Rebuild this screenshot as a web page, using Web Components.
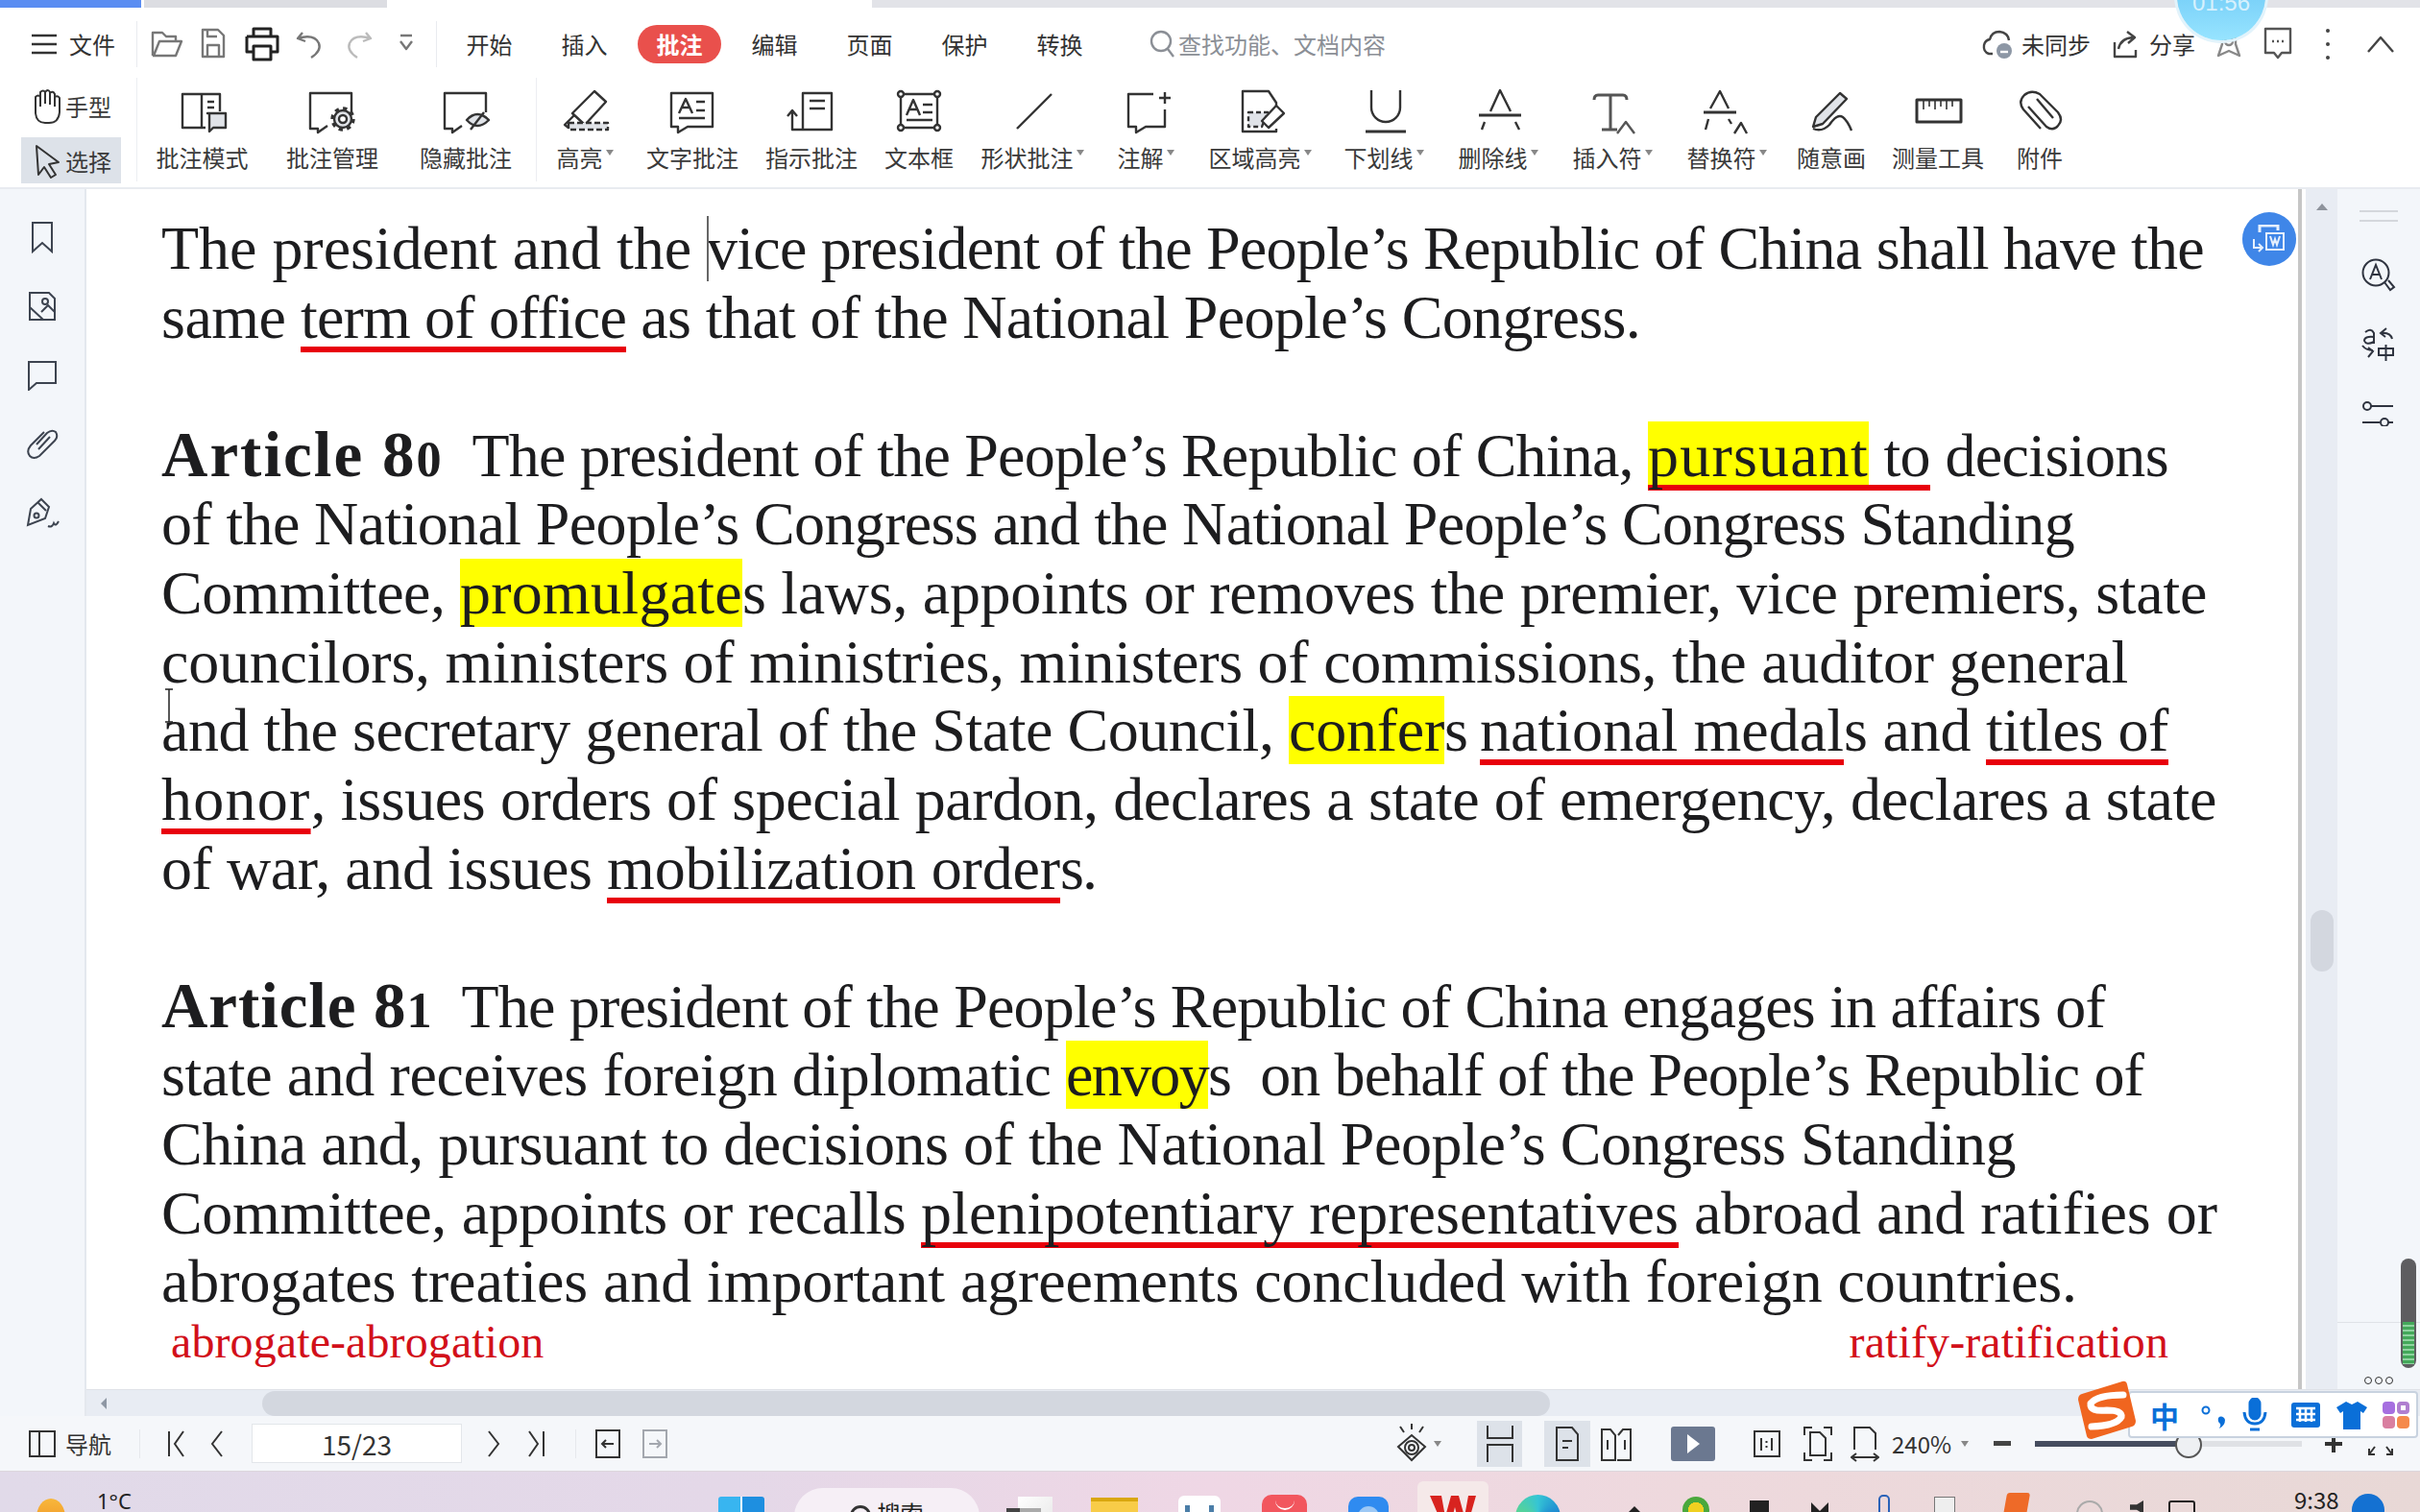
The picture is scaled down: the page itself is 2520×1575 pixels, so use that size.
<!DOCTYPE html>
<html>
<head>
<meta charset="utf-8">
<title>批注</title>
<style>
	html, body { margin: 0; padding: 0; background: #fff; }
</style>
</head>
<body>
<wps-app></wps-app>
<script>
(() => {

	const cjk = `'Noto Sans CJK SC', 'Noto Sans', sans-serif`;
	const G = '#e0e3e8';

	const svg = (w, h, body, extra = '') =>
		`<svg xmlns="http://www.w3.org/2000/svg" width="${w}" height="${h}" viewBox="0 0 ${w} ${h}" fill="none" stroke="#333" stroke-width="2.4" stroke-linejoin="round" ${extra}>${body}</svg>`;

	const tool_icons = {
		mode: `<path d="M29 6H9V41H29V6H48V24M29 41H33M35 14H42M35 20H42"/><path d="M35 26H54V41H41L37 45V26Z" fill="${G}"/>`,
		manage: `<path d="M50 25V5H7V42H15V46L25 39"/><circle cx="41" cy="32" r="11" stroke-width="3.4" stroke-dasharray="4.3 4.3"/><circle cx="41" cy="32" r="9" fill="${G}"/><circle cx="41" cy="32" r="4" fill="#fff"/>`,
		hide: `<path d="M51 25V5H8V42H16V46L26 39"/><path d="M31 33Q42 21 54 33Q42 45 31 33Z" fill="${G}"/><path d="M49 25L35 43"/>`,
		marker: `<path d="M40 3L52 14L30 38L17 26Z"/><path d="M19 28L9 38L13 41H24L28 36"/><path d="M13 36H54V43H13Z" fill="${G}" stroke-dasharray="6 3"/>`,
		text_note: `<path d="M8 5H51V40H25L15 46V40H8Z"/><path d="M16 26L23 11L30 26M19 20H27M34 14H43M34 23H43M16 31H43"/>`,
		pointer: `<path d="M21 5H51V43H21ZM21 43H10V24M5 29L10 23L15 29M28 13H44M28 21H44"/>`,
		textbox: `<path d="M11 6H49V41H11Z"/><circle cx="11" cy="6" r="3" fill="#fff"/><circle cx="49" cy="6" r="3" fill="#fff"/><circle cx="11" cy="41" r="3" fill="#fff"/><circle cx="49" cy="41" r="3" fill="#fff"/><path d="M17 28L24 12L31 28M20 22H28M34 17H44M34 25H44M17 33H44"/>`,
		line: `<path d="M50 6L14 42"/>`,
		note: `<path d="M38 6H12V40H20V46L30 40H50V22M50 4V16M44 10H56"/>`,
		area: `<path d="M47 21V15L39 3H12V45H47V42"/><path d="M18 25H38L32 40H18Z" fill="${G}" stroke-dasharray="5 3"/><path d="M47 18L55 26L39 41L32 34Z" fill="#fff"/>`,
		underline: `<path d="M17 2V20A15 15 0 0 0 47 20V2"/><path d="M11 45H53" stroke-width="3"/>`,
		strike: `<path d="M22 24L32 2L43 24M16 35L13 43M48 35L52 43"/><path d="M10 28H54" stroke-width="3"/>`,
		insert: `<g stroke="#555"><path d="M11 12Q11 7 15 7H41Q45 7 45 12M28 7V43M19 43H35" stroke-width="3"/><path d="M35 47L44 35L53 47"/></g>`,
		replace: `<path d="M13 21L23 3L32 21M11 32L8 43M32 32L35 37M38 47L45 36L51 47"/><path d="M6 25H40" stroke-width="3"/>`,
		pencil: `<path d="M39 5L46 11L21 37L11 40L14 30Z" fill="${G}"/><path d="M11 42Q20 46 28 38Q36 26 42 30Q47 34 51 44"/>`,
		ruler: `<path d="M8 12H54V35H8Z" stroke-width="3"/><path d="M15 13V22M21 13V19M27 13V22M33 13V19M39 13V22M45 13V19" stroke-width="1.6"/>`,
		clip: `<path d="M18 19L37 40Q44 45 49 39Q55 33 49 25L30 6Q21 1 14 7Q7 14 13 22L31 42M27 11L44 31"/>`
	};

	const top_icons = {
		folder: `<path d="M6 32V8H16L20 12H30V17M6 32H30L36 17H13L7 32"/>`,
		save: `<path d="M8 5H24L30 11V33H8ZM13 5V12H23M13 33V21H25V33"/>`,
		print: `<path d="M11 12V4H29V12M4 12H36V28H30M10 28H4V12M11 22H29V36H11Z" stroke-width="3"/>`,
		undo: `<path d="M12 8L7 14L15 17M7 14Q24 9 29 19Q32 27 21 34"/>`,
		redo: `<path d="M28 8L33 14L25 17M33 14Q16 9 11 19Q8 27 19 34" stroke="#bbb"/>`,
		more: `<path d="M14 11H26M14 17L20 25L26 17"/>`,
		hand: `<path d="M12 20V8M12 20V5Q15 2 17 5V17M17 5Q20 1 22 5V18M22 6Q25 3 27 7V20M7 20V10Q10 7 12 10M27 10Q30 8 32 11V26Q31 37 21 37H17Q8 37 7 27L7 18"/>`,
		arrow: `<path d="M8 5L10 35L16 27L23 38L28 35L21 24L31 22Z"/>`
	};

	class RibbonTool extends HTMLElement {
		connectedCallback() {
			const root = this.attachShadow({ mode: 'open' });
			const caret = this.hasAttribute('caret') ? '<i></i>' : '';
			root.innerHTML = `
				<style>
					:host { display: flex; flex-direction: column; align-items: center; width: ${this.getAttribute('w')}px; flex: none; }
					svg { display: block; }
					.label { margin-top: 3px; font-size: 24px; line-height: 34px; color: #3a3a3a; white-space: nowrap; }
					i { display: inline-block; margin: 0 0 12px 3px; border: 4px solid transparent; border-top: 6px solid #888; border-bottom: 0; }
				</style>
				${svg(60, 52, tool_icons[this.getAttribute('icon')])}
				<div class="label">${this.getAttribute('label')}${caret}</div>`;
		}
	}

	class TopBar extends HTMLElement {
		constructor() {
			super();
			const tabs = ['开始', '插入', '批注', '编辑', '页面', '保护', '转换'];
			this.attachShadow({ mode: 'open' }).innerHTML = `
				<style>
					:host { display: flex; align-items: center; height: 72px; padding-top: 3px; box-sizing: border-box; font-size: 24px; color: #333; white-space: nowrap; }
					.sep { width: 1px; height: 48px; background: #e9ebef; flex: none; }
					.file { width: 142px; display: flex; align-items: center; gap: 12px; padding-left: 32px; box-sizing: border-box; }
					.qa { display: flex; padding-left: 5px; width: 311px; box-sizing: border-box; }
					.qa svg { width: 50px; height: 40px; }
					.qa span { width: 50px; flex: none; display: flex; justify-content: center; }
					.tab { width: 99px; text-align: center; flex: none; }
					.tab b { display: inline-block; width: 87px; height: 40px; line-height: 40px; border-radius: 20px; background: #e9504c; color: #fff; font-weight: 700; }
					.search { display: flex; align-items: center; gap: 2px; margin-left: 42px; color: #8b8f96; }
					.right { margin-left: auto; display: flex; align-items: center; }
					.right span { display: block; }
				</style>
				<div class="file">
					${svg(28, 24, '<path d="M1 3H27M1 12H27M1 21H27" stroke-width="2.6"/>')}
					<span>文件</span>
				</div>
				<div class="sep"></div>
				<div class="qa">
					${['folder', 'save', 'print', 'undo', 'redo', 'more'].map(k => `<span>${svg(40, 40, top_icons[k]).replace('stroke="#333"', k === 'print' ? 'stroke="#222"' : 'stroke="#777"')}</span>`).join('')}
				</div>
				<div class="sep"></div>
				<div style="width:5px"></div>
				${tabs.map(t => `<div class="tab">${t === '批注' ? `<b>${t}</b>` : t}</div>`).join('')}
				<div class="search">
					${svg(30, 32, '<circle cx="14" cy="13" r="10" stroke="#8b8f96"/><path d="M21 21L27 29" stroke="#8b8f96"/>')}
					<span>查找功能、文档内容</span>
				</div>
				<div class="right">
					${svg(36, 36, '<path d="M12 28H8Q2 26 3 19Q4 14 9 13Q11 5 19 5Q28 6 29 14" stroke="#444"/><circle cx="24" cy="25" r="8" fill="#8d97a5" stroke="none"/><path d="M20 26H28" stroke="#fff"/>')}
					<span style="margin-left:6px;width:72px">未同步</span>
					<span style="width:20px"></span>
					${svg(32, 32, '<path d="M5 14V29H27V22M9 21Q11 10 24 9M18 3L26 9L19 15" stroke="#444"/>')}
					<span style="margin-left:9px;width:48px">分享</span>
					<span style="width:20px"></span>
					${svg(30, 32, '<path d="M8 8H22V16L26 28L15 23L4 28L8 16Z" stroke="#888"/><circle cx="15" cy="13" r="4" stroke="#888"/>')}
					<span style="width:20px"></span>
					${svg(32, 38, '<path d="M3 3H29V28H20L16 33L12 28H3Z" stroke="#555"/><path d="M10 16H12M15 16H17M20 16H22" stroke="#555"/>')}
					<span style="width:33px"></span>
					${svg(6, 34, '<circle cx="3" cy="3" r="2" fill="#444" stroke="none"/><circle cx="3" cy="17" r="2" fill="#444" stroke="none"/><circle cx="3" cy="31" r="2" fill="#444" stroke="none"/>')}
					<span style="width:37px"></span>
					${svg(30, 20, '<path d="M2 18L15 3L28 18" stroke="#444"/>')}
					<span style="width:26px"></span>
				</div>`;
		}
	}

	class SubBar extends HTMLElement {
		constructor() {
			super();
			const tools = [
				['mode', '批注模式', 135], ['manage', '批注管理', 136], ['hide', '隐藏批注', 142], null,
				['marker', '高亮', 96, 1], ['text_note', '文字批注', 128], ['pointer', '指示批注', 120], ['textbox', '文本框', 104],
				['line', '形状批注', 132, 1], ['note', '注解', 104, 1], ['area', '区域高亮', 134, 1], ['underline', '下划线', 124, 1],
				['strike', '删除线', 114, 1], ['insert', '插入符', 124, 1], ['replace', '替换符', 114, 1], ['pencil', '随意画', 104],
				['ruler', '测量工具', 118], ['clip', '附件', 94]
			];
			this.attachShadow({ mode: 'open' }).innerHTML = `
				<style>
					:host { display: flex; height: 117px; padding-top: 1px; box-sizing: border-box; border-bottom: 2px solid #e8ebf0; }
					.mode { width: 142px; flex: none; font-size: 24px; color: #3a3a3a; padding: 5px 0 0 22px; box-sizing: border-box; }
					.mode div { display: flex; align-items: center; gap: 4px; width: 104px; height: 48px; padding-left: 8px; box-sizing: border-box; }
					.mode .on { background: #dde2e9; margin-top: 9px; }
					.sep { width: 1px; height: 108px; background: #eceef2; flex: none; margin: 0 2px 0 2px; }
					.sep.first { margin: 0; }
					ribbon-tool { margin-top: 11px; }
				</style>
				<div class="mode">
					<div>${svg(34, 38, top_icons.hand).replace('stroke-width="2.4"', 'stroke-width="2"')}<span>手型</span></div>
					<div class="on">${svg(34, 40, top_icons.arrow).replace('stroke-width="2.4"', 'stroke-width="2"')}<span>选择</span></div>
				</div>
				<div class="sep first"></div>
				${tools.map(t => t ? `<ribbon-tool icon="${t[0]}" label="${t[1]}" w="${t[2]}" ${t[3] ? 'caret' : ''}></ribbon-tool>` : '<div class="sep"></div>').join('')}`;
		}
	}

	class SideRail extends HTMLElement {
		constructor() {
			super();
			const stroke = 'stroke="#3d4450" stroke-width="2"';
			this.attachShadow({ mode: 'open' }).innerHTML = `
				<style>
					:host { display: flex; flex-direction: column; align-items: center; width: 90px; flex: none; background: #f3f6fa; border-right: 2px solid #e4e8ee; box-sizing: border-box; padding-top: 14px; }
					span { height: 72px; display: flex; align-items: center; justify-content: center; width: 48px; }
				</style>
				<span><svg width="24" height="34" viewBox="0 0 24 34" fill="none" ${stroke}><path d="M2 2H22V32L12 23L2 32Z"/></svg></span>
				<span><svg width="30" height="32" viewBox="0 0 30 32" fill="none" ${stroke}><path d="M2 2H22L28 8V30H2ZM2 17L16 30M14 22L21 15L28 22"/><circle cx="18" cy="11" r="3"/></svg></span>
				<span><svg width="32" height="32" viewBox="0 0 32 32" fill="none" ${stroke}><path d="M2 2H30V24H10L2 31Z"/></svg></span>
				<span><svg width="36" height="32" viewBox="0 0 36 32" fill="none" ${stroke}><path d="M12 16L23 4Q28 0 32 3Q35 8 31 12L15 28Q9 32 5 28Q1 23 6 17L20 3M14 21L26 8"/></svg></span>
				<span><svg width="36" height="34" viewBox="0 0 36 34" fill="none" ${stroke}><path d="M17 2L25 10L21 22L3 29L6 12ZM14 6L22 14"/><circle cx="12" cy="19" r="2.5"/><path d="M24 30Q28 32 30 27Q32 31 35 25"/></svg></span>`;
		}
	}

	class HlMark extends HTMLElement {
		constructor() {
			super();
			this.attachShadow({ mode: 'open' }).innerHTML = `<style>:host { background: #ffff00; }</style><slot></slot>`;
		}
	}

	class UlMark extends HTMLElement {
		constructor() {
			super();
			this.attachShadow({ mode: 'open' }).innerHTML = `<style>:host { text-decoration: underline #e8000b 6px; text-underline-offset: 9px; text-decoration-skip-ink: none; }</style><slot></slot>`;
		}
	}

	// stretches the letter spacing so that a run of text ends where it ends in the scan
	class FitRun extends HTMLElement {
		constructor() {
			super();
			this.attachShadow({ mode: 'open' }).innerHTML = `<slot></slot>`;
		}

		connectedCallback() {
			const end = Number(this.getAttribute('end'));
			const box = this.getBoundingClientRect();
			this.style.letterSpacing = `${(end - box.right) / this.textContent.length}px`;
		}
	}

	class DocLine extends HTMLElement {
		constructor() {
			super();
			// white-space is pre here, so no blanks around the slot
			this.attachShadow({ mode: 'open' }).innerHTML = `<style>:host { display: block; height: 71.75px; line-height: 71.75px; white-space: pre; }</style><slot></slot>`;
		}
	}

	class DocPage extends HTMLElement {
		constructor() {
			super();
			this.attachShadow({ mode: 'open' }).innerHTML = `
				<style>
					:host { display: block; flex: 1; min-width: 0; position: relative; overflow: hidden; background: #fff; box-sizing: border-box;
						padding: 26px 0 0 78px; font: 64px 'Liberation Serif', serif; color: #1d1d1f; border-right: 4px solid #c6c6c6; }
					b { font-weight: 700; font-size: 67px; letter-spacing: 2px; }
					b.narrow { letter-spacing: .9px; }
					b small { font-size: .78em; }
					.gap { margin-left: 30px; }
					.caret { position: absolute; left: 646px; top: 28px; width: 2px; height: 68px; background: #666; }
					.ibeam { position: absolute; left: 82px; top: 520px; width: 8px; height: 36px; }
					.note { display: flex; justify-content: space-between; width: 2080px; padding-left: 10px; margin-top: -3px; font-size: 48px; line-height: 60px; color: #d2101a; letter-spacing: .1px; }
				</style>
				<div class="caret"></div>
				<svg class="ibeam" viewBox="0 0 8 36" fill="none" stroke="#222" stroke-width="1.5"><path d="M0 1H8M4 1V35M0 35H8"/></svg>
				<doc-line><fit-run end="736">The president and the </fit-run><fit-run end="2295">vice president of the People’s Republic of China shall have the</fit-run></doc-line>
				<doc-line><fit-run end="313">same </fit-run><ul-mark><fit-run end="652">term of office</fit-run></ul-mark><fit-run end="1708"> as that of the National People’s Congress.</fit-run></doc-line>
				<doc-line></doc-line>
				<doc-line><b>Article 8<small>0</small></b><span class="gap"></span><fit-run end="1716">The president of the People’s Republic of China, </fit-run><ul-mark><fit-run end="1946"><hl-mark>pursuant</hl-mark></fit-run><fit-run end="2010"> to</fit-run></ul-mark><fit-run end="2258"> decisions</fit-run></doc-line>
				<doc-line><fit-run end="2160">of the National People’s Congress and the National People’s Congress Standing</fit-run></doc-line>
				<doc-line><fit-run end="479">Committee, </fit-run><fit-run end="773"><hl-mark>promulgate</hl-mark></fit-run><fit-run end="2298">s laws, appoints or removes the premier, vice premiers, state</fit-run></doc-line>
				<doc-line><fit-run end="2216">councilors, ministers of ministries, ministers of commissions, the auditor general</fit-run></doc-line>
				<doc-line><fit-run end="1342">and the secretary general of the State Council, </fit-run><fit-run end="1504"><hl-mark>confer</hl-mark></fit-run><fit-run end="1541">s </fit-run><ul-mark><fit-run end="1920">national medal</fit-run></ul-mark><fit-run end="2068">s and </fit-run><ul-mark><fit-run end="2258">titles of</fit-run></ul-mark></doc-line>
				<doc-line><ul-mark><fit-run end="321">honor</fit-run></ul-mark><fit-run end="2308">, issues orders of special pardon, declares a state of emergency, declares a state</fit-run></doc-line>
				<doc-line><fit-run end="632">of war, and issues </fit-run><ul-mark><fit-run end="1104">mobilization order</fit-run></ul-mark><fit-run end="1141">s.</fit-run></doc-line>
				<doc-line></doc-line>
				<doc-line><b class="narrow">Article 8<small>1</small></b><span class="gap"></span><fit-run end="2192">The president of the People’s Republic of China engages in affairs of</fit-run></doc-line>
				<doc-line><fit-run end="1110">state and receives foreign diplomatic </fit-run><fit-run end="1258"><hl-mark>envoy</hl-mark></fit-run><fit-run end="2232">s  on behalf of the People’s Republic of</fit-run></doc-line>
				<doc-line><fit-run end="2099">China and, pursuant to decisions of the National People’s Congress Standing</fit-run></doc-line>
				<doc-line><fit-run end="959">Committee, appoints or recalls </fit-run><ul-mark><fit-run end="1748">plenipotentiary representatives</fit-run></ul-mark><fit-run end="2309"> abroad and ratifies or</fit-run></doc-line>
				<doc-line><fit-run end="2163">abrogates treaties and important agreements concluded with foreign countries.</fit-run></doc-line>
				<div class="note"><span>abrogate-abrogation</span><span>ratify-ratification</span></div>`;
		}
	}

	class VScroll extends HTMLElement {
		constructor() {
			super();
			this.attachShadow({ mode: 'open' }).innerHTML = `
				<style>
					:host { display: block; width: 33px; margin-left: 4px; flex: none; background: #e8ecf3; box-sizing: border-box; padding: 15px 2px 0; }
					.up { width: 0; margin: 0 auto; border: 6px solid transparent; border-bottom: 7px solid #8e939c; border-top: 0; }
					.thumb { width: 24px; height: 64px; margin: 729px auto 0; border-radius: 12px; background: #d3d7df; }
				</style>
				<div class="up"></div>
				<div class="thumb"></div>`;
		}
	}

	class RightRail extends HTMLElement {
		constructor() {
			super();
			const s = 'stroke="#2f3440" stroke-width="2"';
			this.attachShadow({ mode: 'open' }).innerHTML = `
				<style>
					:host { display: flex; flex-direction: column; align-items: center; width: 86px; flex: none; background: #f3f6fa; box-sizing: border-box; padding-top: 22px; color: #2f3440; }
					.rule { width: 40px; height: 8px; flex: none; border-top: 2px solid #d4d7dc; border-bottom: 2px solid #d4d7dc; margin-bottom: 20px; }
					span { height: 72px; flex: none; display: flex; align-items: center; justify-content: center; }
					.line { width: 86px; height: 1px; flex: none; background: #dfe2e7; margin-top: 910px; }
					.dots { display: flex; gap: 3px; margin-top: 56px; flex: none; }
					.dots i { width: 6px; height: 6px; border: 1.5px solid #333; border-radius: 50%; }
				</style>
				<div class="rule"></div>
				<span><svg width="36" height="36" viewBox="0 0 36 36" fill="none" ${s}><circle cx="15" cy="15" r="13.5"/><path d="M9 22L15 7L21 22M11 17H19M24 25L30 33L34 30L28 23"/></svg></span>
				<span><svg width="36" height="36" viewBox="0 0 36 36" fill="none" ${s}><path d="M4 5Q10 0 13 6V17M13 10Q3 9 3 14Q5 19 13 15M32 12Q30 5 21 6M26 1L20 6L25 10M12 24Q5 24 1 19M7 31L12 25L7 21M18 22H33V29H18ZM25.500 18V35"/></svg></span>
				<span><svg width="34" height="26" viewBox="0 0 34 26" fill="none" ${s}><circle cx="5" cy="5" r="4"/><path d="M9 5H32M0 22H18M27 22H32"/><circle cx="23" cy="22" r="4"/></svg></span>
				<div class="line"></div>
				<div class="dots"><i></i><i></i><i></i></div>`;
		}
	}

	class HScroll extends HTMLElement {
		constructor() {
			super();
			this.attachShadow({ mode: 'open' }).innerHTML = `
				<style>
					:host { display: flex; align-items: center; height: 28px; background: #e8ecf3; flex: none; border-top: 1px solid #dfe2e7; box-sizing: border-box; }
					.left { margin-left: 15px; border: 6px solid transparent; border-right: 6px solid #8e97a4; border-left: 0; }
					.thumb { margin-left: 162px; width: 1341px; height: 26px; border-radius: 13px; background: #d3d7df; }
				</style>
				<div class="left"></div>
				<div class="thumb"></div>`;
		}
	}

	class StatusBar extends HTMLElement {
		constructor() {
			super();
			const c = 'stroke="#333" stroke-width="2"';
			this.attachShadow({ mode: 'open' }).innerHTML = `
				<style>
					:host { display: flex; align-items: center; height: 57px; flex: none; background: #f5f7fa; font-size: 24px; color: #333; white-space: nowrap; }
					.sep { width: 1px; height: 30px; background: #e6e8ec; flex: none; }
					.page { width: 219px; height: 41px; line-height: 41px; font-size: 28px; text-align: center; background: #fff; border: 1px solid #e3e6ea; box-sizing: border-box; flex: none; }
					svg { display: block; flex: none; }
					.tile { height: 48px; background: #dde2e9; display: flex; align-items: center; justify-content: center; flex: none; }
					.slide { width: 278px; height: 6px; background: linear-gradient(90deg, #454c5e 57%, #dfe1e5 57%); position: relative; flex: none; }
					.slide i { position: absolute; left: 146px; top: -10px; width: 24px; height: 24px; border-radius: 50%; background: #eef0f3; border: 2px solid #555; }
				</style>
				<span style="width:30px"></span>
				<svg width="28" height="28" viewBox="0 0 28 28" fill="none" ${c}><path d="M1 1H27V27H1ZM11 1V27"/></svg>
				<span style="margin-left:10px;width:48px">导航</span>
				<span style="width:29px"></span><div class="sep"></div>
				<span style="width:28px"></span>
				<svg width="20" height="28" viewBox="0 0 20 28" fill="none" ${c}><path d="M2 1V27M17 1L8 14L17 27"/></svg>
				<span style="width:25px"></span>
				<svg width="14" height="28" viewBox="0 0 14 28" fill="none" ${c}><path d="M12 1L2 14L12 27"/></svg>
				<span style="width:29px"></span>
				<div class="page">15/23</div>
				<span style="width:26px"></span>
				<svg width="14" height="28" viewBox="0 0 14 28" fill="none" ${c}><path d="M2 1L12 14L2 27"/></svg>
				<span style="width:27px"></span>
				<svg width="20" height="28" viewBox="0 0 20 28" fill="none" ${c}><path d="M18 1V27M3 1L12 14L3 27"/></svg>
				<span style="width:31px"></span><div class="sep"></div>
				<span style="width:20px"></span>
				<svg width="26" height="30" viewBox="0 0 26 30" fill="none" ${c}><path d="M1 1H25V29H1ZM19 15H7M11 11L7 15L11 19"/></svg>
				<span style="width:23px"></span>
				<svg width="26" height="30" viewBox="0 0 26 30" fill="none" stroke="#a3a7ae" stroke-width="2"><path d="M1 1H25V29H1ZM7 15H19M15 11L19 15L15 19"/></svg>
				<span style="width:758px"></span>
				<svg width="34" height="42" viewBox="0 0 34 42" fill="none" ${c}><path d="M17 0V6M5 3L9 9M29 3L25 9M3 24L17 12L31 24L17 38Z"/><circle cx="17" cy="25" r="7"/><circle cx="17" cy="25" r="3"/></svg>
				<i style="margin-left:6px;border:4px solid transparent;border-top:6px solid #888;border-bottom:0"></i>
				<span style="width:37px"></span>
				<div class="tile" style="width:47px"><svg width="30" height="38" viewBox="0 0 30 38" fill="none" ${c}><path d="M2 0V13H28V0M2 38V20H28V38"/></svg></div>
				<span style="width:23px"></span>
				<div class="tile" style="width:48px"><svg width="26" height="36" viewBox="0 0 26 36" fill="none" ${c}><path d="M2 1H18L24 8V35H2ZM8 15H18M8 22H14"/></svg></div>
				<span style="width:10px"></span>
				<svg width="34" height="36" viewBox="0 0 34 36" fill="none" ${c}><path d="M2 3H11L16 9V35H2ZM19 9L24 3H32V35H18M8 14V24M26 14V24"/></svg>
				<span style="width:40px"></span>
				<div style="width:46px;height:36px;border-radius:3px;background:#6b7890;display:flex;align-items:center;justify-content:center;flex:none"><i style="border:10px solid transparent;border-left:13px solid #fff;border-right:0"></i></div>
				<span style="width:40px"></span>
				<svg width="28" height="28" viewBox="0 0 28 28" fill="none" ${c}><path d="M1 1H27V27H1Z"/><path d="M8 8V21M19 8V21M13.500 11V13M13.500 16V18"/></svg>
				<span style="width:24px"></span>
				<svg width="30" height="36" viewBox="0 0 30 36" fill="none" ${c}><path d="M1 9V1H9M21 1H29V9M29 27V35H21M9 35H1V27M7 6H17L23 12V30H7Z"/></svg>
				<span style="width:19px"></span>
				<svg width="30" height="38" viewBox="0 0 30 38" fill="none" ${c}><path d="M4 25V2H20L26 8V25M1 33H29M6 29L1 33L6 37M24 29L29 33L24 37"/></svg>
				<span style="margin-left:13px;width:65px">240%</span>
				<i style="margin-left:7px;border:4px solid transparent;border-top:6px solid #888;border-bottom:0"></i>
				<span style="width:26px"></span>
				<span style="width:18px;height:5px;background:#444;flex:none"></span>
				<span style="width:25px"></span>
				<div class="slide"><i></i></div>
				<span style="width:24px"></span>
				<svg width="18" height="18" viewBox="0 0 18 18" fill="none" stroke="#333" stroke-width="4"><path d="M9 0V18M0 9H18"/></svg>
				<span style="width:26px"></span>
				<svg width="28" height="12" viewBox="0 0 28 12" fill="none" ${c} style="margin-top:14px"><path d="M8 2L2 10M2 4V10H8M20 2L26 10M26 4V10H20"/></svg>`;
		}
	}

	class TaskBar extends HTMLElement {
		constructor() {
			super();
			const tile = (w, top, bg, ml, r, inner = '') => `<div style="width:${w}px;height:44px;background:${bg};border-radius:${r}px ${r}px 0 0;margin:${top}px 0 0 ${ml}px;flex:none;position:relative;overflow:hidden">${inner}</div>`;
			this.attachShadow({ mode: 'open' }).innerHTML = `
				<style>
					:host { display: flex; align-items: flex-start; height: 43px; flex: none; overflow: hidden; position: relative; font-size: 24px; color: #222; white-space: nowrap;
						background: linear-gradient(90deg, #e1dae9 0%, #e4d8e8 30%, #efd7e5 50%, #eed9dd 70%, #e8d8d6 100%); border-top: 1px solid #dcd6dc; box-sizing: border-box; }
					.row { display: flex; align-items: flex-start; height: 43px; }
					.pill { width: 193px; height: 60px; margin: 17px 0 0 31px; background: #f6eff6; border-radius: 30px; display: flex; justify-content: center; gap: 6px; line-height: 52px; flex: none; }
					.pill i { width: 16px; height: 16px; margin-top: 18px; border: 3px solid #333; border-radius: 50%; }
					.active { width: 74px; height: 60px; margin: 10px 0 0 30px; background: #f5e9e9; border-radius: 6px; flex: none; display: flex; justify-content: center; padding-top: 11px; box-sizing: border-box; }
					.clock { position: absolute; left: 2389px; top: 14px; font-size: 24px; line-height: 30px; }
				</style>
				<div class="row">
					<div style="margin:28px 0 0 38px;width:30px;height:40px;border-radius:50%;background:linear-gradient(#f7b73c,#ef8a1e);flex:none"></div>
					<span style="margin:17px 0 0 33px;flex:none;font-family:'Noto Sans',sans-serif;font-size:22px;line-height:26px">1°C</span>
					<div style="margin:26px 0 0 611px;width:48px;height:40px;background:linear-gradient(90deg,#38b5f0 48%,#fff 48%,#fff 52%,#1e8fe0 52%);flex:none;border-radius:3px"></div>
					<div class="pill"><i></i><span>搜索</span></div>
					<div style="margin:26px 0 0 40px;width:36px;height:40px;background:linear-gradient(135deg,#fff,#e4e4e4);flex:none;position:relative"><i style="position:absolute;left:-12px;top:12px;width:36px;height:12px;background:linear-gradient(90deg,#444 40%,#aaa 40%)"></i></div>
					<div style="margin:27px 0 0 40px;width:49px;height:40px;background:#f8cc48;border-top:4px solid #d9a70e;box-sizing:border-box;flex:none"></div>
					${tile(44, 25, '#fff', 42, 6, '<i style="position:absolute;left:7px;top:10px;width:30px;height:14px;background:linear-gradient(90deg,#4b7ea8 18%,#fff 18%,#fff 82%,#4b7ea8 82%)"></i>')}
					${tile(47, 24, '#f2565e', 43, 10, '<i style="position:absolute;left:14px;top:4px;width:20px;height:10px;border-bottom:2px solid #fff;border-radius:0 0 10px 10px"></i>')}
					${tile(42, 26, '#2f8bf0', 43, 10, '<i style="position:absolute;left:10px;top:10px;width:22px;height:22px;border-radius:50%;background:#9cc8f5"></i>')}
					<div class="active"><svg width="48" height="32" viewBox="0 0 48 32"><path d="M0 4H12L16 26L22 4H30L36 26L40 4H48L40 32H30L26 16L22 32H12Z" fill="#d8231f"/></svg></div>
					<div style="margin:24px 0 0 28px;width:47px;height:47px;border-radius:50%;background:conic-gradient(#35c5d5,#1a7fd1,#1a5fb4,#5ed68a,#35c5d5);flex:none"></div>
				</div>
				<span class="clock">9:38</span>
				<div style="position:absolute;left:1696px;top:36px;border:6px solid transparent;border-bottom:6px solid #222;border-top:0"></div>
				<div style="position:absolute;left:1752px;top:26px;width:28px;height:28px;border-radius:50%;background:radial-gradient(#f0d020 40%,#4aa83c 42%)"></div>
				<div style="position:absolute;left:1822px;top:30px;width:20px;height:20px;background:#222"></div>
				<div style="position:absolute;left:1886px;top:32px;border:9px solid #222;border-top-color:transparent"></div>
				<div style="position:absolute;left:1956px;top:24px;width:8px;height:20px;border:2px solid #2a62b8;border-radius:5px 5px 0 0"></div>
				<div style="position:absolute;left:2014px;top:26px;width:20px;height:20px;background:#eee;border:1px solid #777"></div>
				<div style="position:absolute;left:2088px;top:22px;width:24px;height:24px;background:#ee6a28;transform:skewX(-10deg);border-radius:3px"></div>
				<div style="position:absolute;left:2162px;top:30px;width:24px;height:24px;border:2px solid #aaa;border-radius:50%"></div>
				<div style="position:absolute;left:2218px;top:30px;width:14px;height:14px;background:#333;clip-path:polygon(0 30%,50% 30%,100% 0,100% 100%,50% 70%,0 70%)"></div>
				<div style="position:absolute;left:2258px;top:30px;width:24px;height:16px;border:2px solid #222;border-radius:3px"></div>
				<div style="position:absolute;left:2449px;top:23px;width:34px;height:34px;border-radius:50%;background:#1471d2"></div>`;
		}
	}

	class ClockBubble extends HTMLElement {
		constructor() {
			super();
			this.attachShadow({ mode: 'open' }).innerHTML = `
				<style>
					:host { position: absolute; left: 2267px; top: -50px; width: 92px; height: 92px; border-radius: 50%; box-sizing: border-box; padding-top: 41px; text-align: center;
						background: linear-gradient(#5cbdf2, #97e4ff); box-shadow: 0 0 0 3px #e2f3fb; color: #d7f1fd; font: 24px/24px 'Liberation Sans', sans-serif; }
				</style>
				01:56`;
		}
	}

	class SyncBadge extends HTMLElement {
		constructor() {
			super();
			this.attachShadow({ mode: 'open' }).innerHTML = `
				<style>
					:host { position: absolute; left: 2335px; top: 221px; width: 56px; height: 56px; border-radius: 50%; background: #3f86e8; box-shadow: 0 0 0 2px #fff; display: flex; align-items: center; justify-content: center; }
				</style>
				<svg width="34" height="30" viewBox="0 0 34 30" fill="none" stroke="#e6f0fd" stroke-width="2">
					<path d="M7 8V1H26V6" stroke-width="3"/>
					<path d="M14 9H32V26H14ZM18 12L21 21L23 15L25 21L28 12"/>
					<path d="M1 15V24H10M6 20L10 24L6 28"/>
				</svg>`;
		}
	}

	class VolumeBar extends HTMLElement {
		constructor() {
			super();
			this.attachShadow({ mode: 'open' }).innerHTML = `
				<style>
					:host { position: absolute; left: 2500px; top: 1311px; width: 16px; height: 114px; border-radius: 8px; overflow: hidden; background: #5d5d60; }
					div { margin: 66px 2px 0; height: 44px; background: repeating-linear-gradient(#43a85a 0 3px, #8fd3a0 3px 5px); }
				</style>
				<div></div>`;
		}
	}

	class ImeBar extends HTMLElement {
		constructor() {
			super();
			this.attachShadow({ mode: 'open' }).innerHTML = `
				<style>
					:host { position: absolute; left: 2160px; top: 1438px; width: 360px; height: 64px; }
					.box { position: absolute; left: 56px; top: 11px; width: 302px; height: 49px; background: #fff; border: 2px solid #c8d2df; border-radius: 4px; box-sizing: border-box; display: flex; align-items: center; color: #0a6fd8; }
					.s { position: absolute; left: 4px; top: 0; }
					.cn { margin-left: 21px; width: 40px; font: 700 30px 'Noto Sans CJK SC', sans-serif; }
					svg { flex: none; display: block; }
				</style>
				<div class="box">
					<span class="cn">中</span>
					<svg style="margin-left:11px" width="30" height="30" viewBox="0 0 30 30" fill="#0a6fd8"><circle cx="7" cy="10" r="3.500" fill="none" stroke="#0a6fd8" stroke-width="2"/><path d="M20 18a4 4 0 0 1 7 2q0 6-6 9q2-3 1-5q-3-2-2-6Z"/></svg>
					<svg style="margin-left:15px" width="26" height="36" viewBox="0 0 26 36" fill="none" stroke="#0a6fd8" stroke-width="3"><rect x="8" y="1" width="10" height="21" rx="5" fill="#0a6fd8"/><path d="M2 15Q3 27 13 27Q23 27 24 15M8 33H18"/></svg>
					<svg style="margin-left:25px" width="30" height="26" viewBox="0 0 30 26"><rect width="30" height="26" rx="3" fill="#0a6fd8"/><path d="M5 6H25M5 12H25M5 18H25M9 5V20M15 5V20M21 5V20" stroke="#fff" stroke-width="2.500"/></svg>
					<svg style="margin-left:17px" width="32" height="30" viewBox="0 0 32 30"><path d="M10 1L16 4L22 1L32 7L28 13L25 11V30H7V11L4 13L0 7Z" fill="#0a6fd8"/></svg>
					<svg style="margin-left:16px" width="28" height="28" viewBox="0 0 28 28"><rect width="13" height="13" rx="4" fill="#a66fe0"/><rect x="15" width="13" height="13" rx="4" fill="#b07fd0"/><rect y="15" width="13" height="13" rx="4" fill="#d97fa0"/><rect x="15" y="15" width="13" height="13" rx="4" fill="#f58a4c"/><rect x="19" y="4" width="5" height="5" fill="#fff"/></svg>
				</div>
				<svg class="s" width="60" height="62" viewBox="0 0 60 62">
					<path d="M4 14L46 1Q50 0 51 4L60 42Q60 47 56 48L14 61Q10 61 9 58L0 20Q0 15 4 14Z" fill="#f0651f"/>
					<path d="M47 15Q20 15 13 24Q12 33 30 31Q46 31 45 38Q40 47 14 48" fill="none" stroke="#fff" stroke-width="7" stroke-linecap="round"/>
				</svg>`;
		}
	}

	class WpsApp extends HTMLElement {
		constructor() {
			super();
			this.attachShadow({ mode: 'open' }).innerHTML = `
				<style>
					:host { display: flex; flex-direction: column; position: relative; width: 2520px; height: 1575px; overflow: hidden; background: #fff; font-family: ${cjk}; }
					.tabs { display: flex; height: 8px; flex: none; }
					.tabs i { display: block; height: 8px; }
					.body { display: flex; flex: 1; min-height: 0; }
					.main { display: flex; flex-direction: column; flex: 1; min-width: 0; }
					.panes { display: flex; flex: 1; min-height: 0; }
				</style>
				<div class="tabs">
					<i style="width:147px;background:#5a8df2"></i>
					<i style="width:3px"></i>
					<i style="width:253px;background:#dcdde2"></i>
					<i style="width:505px"></i>
					<i style="flex:1;background:#e2e3e8"></i>
				</div>
				<top-bar></top-bar>
				<sub-bar></sub-bar>
				<div class="body">
					<side-rail></side-rail>
					<div class="main">
						<div class="panes">
							<doc-page></doc-page>
							<v-scroll></v-scroll>
							<right-rail></right-rail>
						</div>
						<h-scroll></h-scroll>
					</div>
				</div>
				<status-bar></status-bar>
				<task-bar></task-bar>
				<clock-bubble></clock-bubble>
				<sync-badge></sync-badge>
				<volume-bar></volume-bar>
				<ime-bar></ime-bar>`;
		}
	}

	customElements.define('ribbon-tool', RibbonTool);
	customElements.define('top-bar', TopBar);
	customElements.define('sub-bar', SubBar);
	customElements.define('side-rail', SideRail);
	customElements.define('hl-mark', HlMark);
	customElements.define('ul-mark', UlMark);
	customElements.define('fit-run', FitRun);
	customElements.define('doc-line', DocLine);
	customElements.define('doc-page', DocPage);
	customElements.define('v-scroll', VScroll);
	customElements.define('right-rail', RightRail);
	customElements.define('h-scroll', HScroll);
	customElements.define('status-bar', StatusBar);
	customElements.define('task-bar', TaskBar);
	customElements.define('clock-bubble', ClockBubble);
	customElements.define('sync-badge', SyncBadge);
	customElements.define('volume-bar', VolumeBar);
	customElements.define('ime-bar', ImeBar);
	customElements.define('wps-app', WpsApp);

})();
</script>
</body>
</html>
